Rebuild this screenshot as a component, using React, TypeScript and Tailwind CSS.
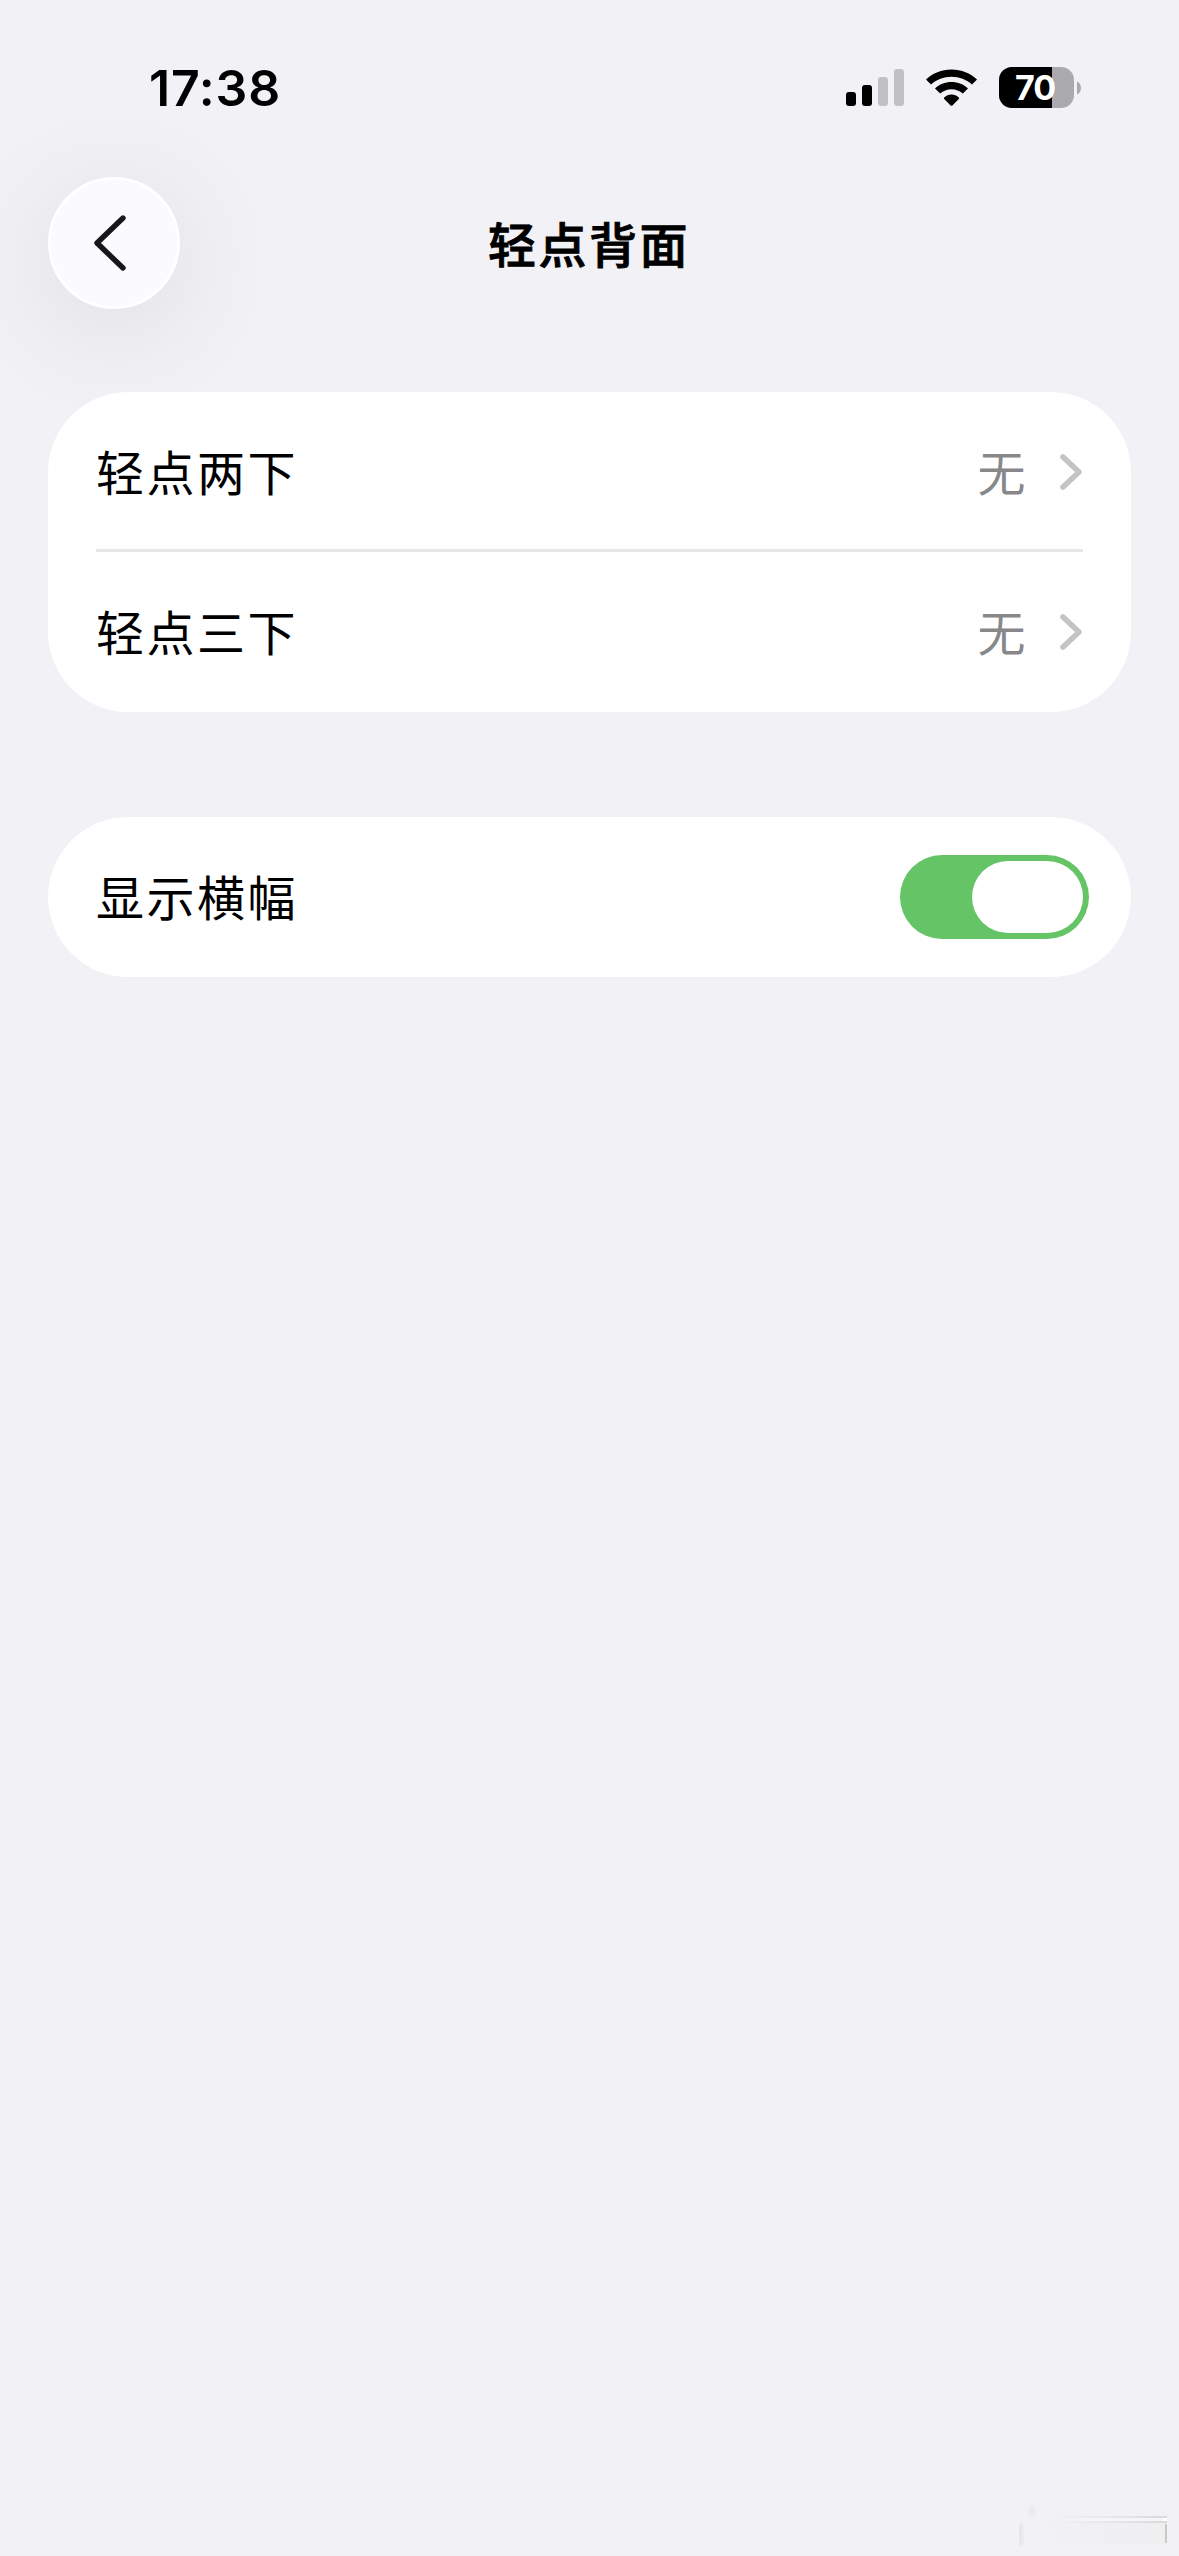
import { useState } from "react";
import * as Switch from "@radix-ui/react-switch";

interface LinkRowProps {
  label: string;
  value: string;
}

const links: LinkRowProps[] = [
  { label: "轻点两下", value: "无" },
  { label: "轻点三下", value: "无" },
];

const bars = [
  "h-[14px] bg-black",
  "h-[21px] bg-black",
  "h-[29px] bg-[#c1c0c5]",
  "h-[37px] bg-[#c1c0c5]",
];

const WifiIcon = () => (
  <svg width="51" height="38" viewBox="0 0 51 38" className="ml-[22px]">
    <path d="M25.5 0.5C35.4 0.5 44.4 4.3 51 10.4L46 15.5C40.6 10.6 33.4 7.7 25.5 7.7S10.4 10.6 5 15.5L0 10.4C6.6 4.3 15.6 0.5 25.5 0.5Z" />
    <path d="M25.5 13.1C31.9 13.1 37.7 15.5 42 19.4L36.8 24.6C33.8 21.9 29.8 20.3 25.5 20.3S17.2 21.9 14.2 24.6L9 19.4C13.3 15.5 19.1 13.1 25.5 13.1Z" />
    <path d="M25.5 25.4C28.3 25.4 30.8 26.5 32.8 28.4C33.3 28.9 33.3 29.5 32.8 30L26.4 36.4C25.8 37 25.2 37 24.6 36.4L18.2 30C17.7 29.5 17.7 28.9 18.2 28.4C20.2 26.5 22.7 25.4 25.5 25.4Z" />
  </svg>
);

const Battery = () => (
  <div className="ml-[22px] flex items-center gap-[3px]">
    <div className="relative flex h-[41px] w-[75px] overflow-hidden rounded-[13px] bg-[#aaa9ae]">
      <div className="h-full w-[53px] bg-black" />
      <span className="absolute inset-0 pr-[3px] text-center font-['Inter'] text-[34px] leading-[42px] font-bold tracking-[-1px] text-white">
        70
      </span>
    </div>
    <svg width="4" height="14" viewBox="0 0 4 14">
      <path d="M0 0.5C2.4 1.6 4 4 4 7S2.4 12.4 0 13.5Z" fill="#aaa9ae" />
    </svg>
  </div>
);

const StatusBar = () => (
  <div className="flex h-[177px] items-start justify-between pt-[67px] pr-[98px] pl-[149px]">
    <span className="font-['Inter'] text-[50px] leading-[42px] font-semibold tracking-[0.8px]">
      17:38
    </span>
    <div className="flex h-[41px] items-center">
      <div className="flex h-[37px] items-end gap-[6px]">
        {bars.map((bar) => (
          <div key={bar} className={`w-[10px] rounded-[3px] ${bar}`} />
        ))}
      </div>
      <WifiIcon />
      <Battery />
    </div>
  </div>
);

const Header = () => (
  <header className="grid h-[132px] grid-cols-[132px_1fr_132px] items-center">
    <button
      aria-label="返回"
      className="flex size-[132px] items-center justify-center rounded-full border-[3px] border-white bg-[#fafaff] shadow-[0_20px_110px_6px_rgba(0,0,0,0.08)]"
    >
      <svg
        width="32"
        height="56"
        viewBox="0 0 32 56"
        fill="none"
        className="mr-[9px]"
      >
        <path
          d="M29 3L3 28L29 53"
          stroke="#17171b"
          strokeWidth="5.4"
          strokeLinecap="round"
          strokeLinejoin="round"
        />
      </svg>
    </button>
    <h1 className="pr-[1px] pb-[3px] text-center text-[48px] font-medium tracking-[2.5px] [-webkit-text-stroke:0.9px_black]">
      轻点背面
    </h1>
  </header>
);

const LinkRow = ({ label, value }: LinkRowProps) => (
  <a className="flex h-[160px] items-center">
    <span className="flex-1 pb-[5px]">{label}</span>
    <span className="mr-[31px] pb-[5px] text-[#88888a]">{value}</span>
    <svg width="24" height="38" viewBox="0 0 24 38" fill="none">
      <path
        d="M4 4L20 19L4 34"
        stroke="#c4c4c6"
        strokeWidth="5.6"
        strokeLinecap="round"
        strokeLinejoin="round"
      />
    </svg>
  </a>
);

// Leftover smudge of the corner stamp
const CornerMark = () => (
  <svg
    width="160"
    height="50"
    viewBox="0 0 160 50"
    className="absolute right-0 bottom-0"
  >
    <defs>
      <linearGradient id="fade" x1="0" x2="1">
        <stop offset="0" stopColor="#e9e9ec" stopOpacity="0" />
        <stop offset="1" stopColor="#d8d8db" />
      </linearGradient>
      <linearGradient id="panel" x1="0" x2="1">
        <stop offset="0" stopColor="#f0f0f3" stopOpacity="0" />
        <stop offset="1" stopColor="#efeff0" />
      </linearGradient>
      <filter id="soft" x="-100%" width="300%">
        <feGaussianBlur stdDeviation="1.5" />
      </filter>
    </defs>
    <rect x="20" y="16" width="127" height="22" fill="url(#panel)" />
    <rect x="-6" y="18" width="10" height="21" fill="#e6e6e9" filter="url(#soft)" />
    <rect x="10" y="1" width="6" height="9" fill="#e9e9ec" filter="url(#soft)" />
    <rect x="20" y="10" width="128" height="2" fill="url(#fade)" />
    <rect x="60" y="12" width="88" height="3" fill="#f5f5f7" />
    <rect x="20" y="15" width="128" height="2" fill="url(#fade)" />
    <rect x="144" y="12" width="4" height="3" fill="#fff" />
    <rect x="146" y="18" width="2" height="19" fill="#c8c8ca" />
  </svg>
);

export default function App() {
  const [showBanner, setShowBanner] = useState(true);

  return (
    <div className="relative h-[2556px] w-[1179px] overflow-hidden bg-[#f1f1f6] font-['Noto_Sans_CJK_SC',sans-serif] text-black">
      <StatusBar />
      <div className="flex flex-col px-[48px] text-[48px] leading-[60px] tracking-[2.5px]">
        <Header />

        <section className="relative mt-[83px] rounded-[80px] bg-white px-[48px]">
          {links.map((link) => (
            <LinkRow key={link.label} {...link} />
          ))}
          <div className="absolute inset-x-[48px] top-[157px] h-[3px] bg-[#e6e6e6]" />
        </section>

        <section className="mt-[105px] flex h-[160px] items-center justify-between rounded-[80px] bg-white pr-[42px] pl-[48px]">
          <span className="pb-[5px]">显示横幅</span>
          <Switch.Root
            checked={showBanner}
            onCheckedChange={setShowBanner}
            aria-label="显示横幅"
            className="flex h-[84px] w-[189px] items-center justify-start rounded-full bg-[#dcdce0] p-[6px] data-[state=checked]:justify-end data-[state=checked]:bg-[#65c466]"
          >
            <Switch.Thumb className="h-[72px] w-[111px] rounded-full bg-white" />
          </Switch.Root>
        </section>
      </div>
      <CornerMark />
    </div>
  );
}
